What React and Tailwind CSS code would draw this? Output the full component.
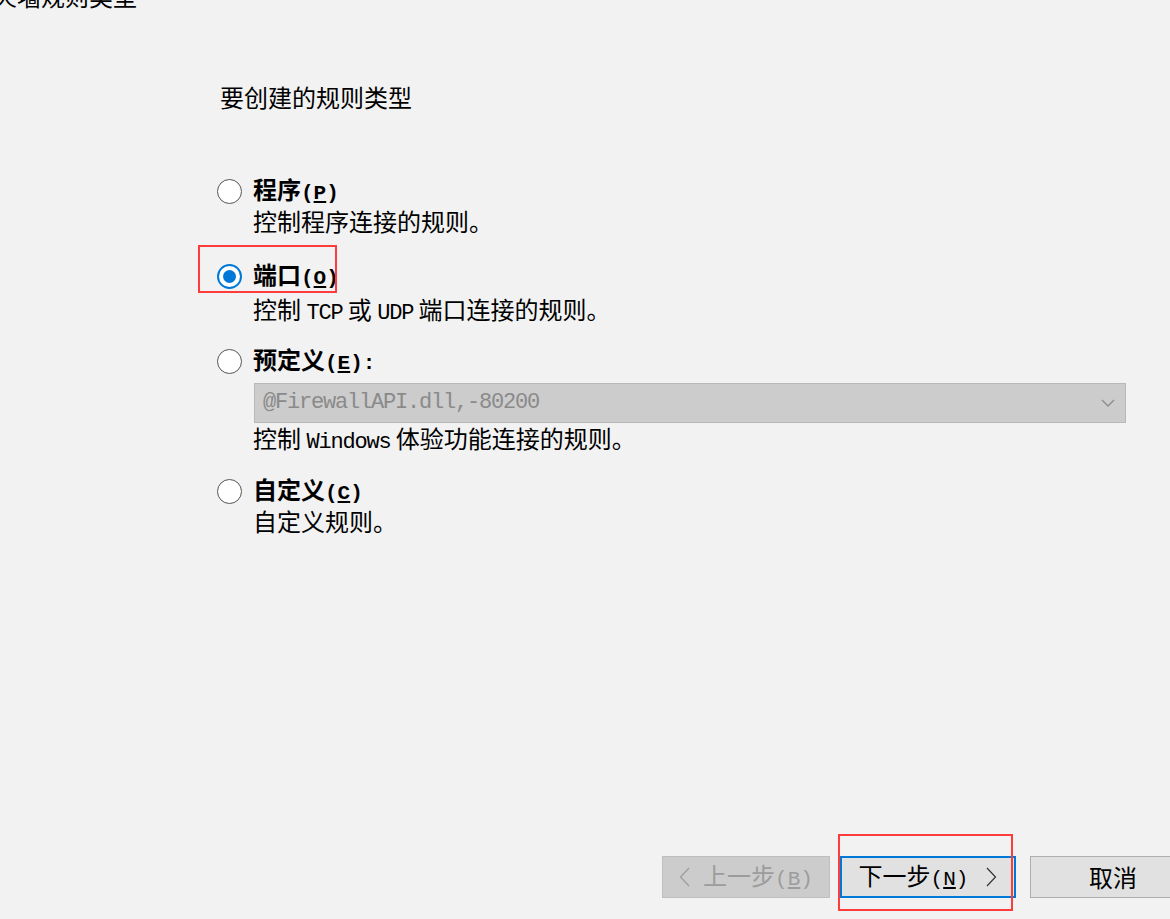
import { useState } from "react";

const mono = "font-['Liberation_Mono',monospace] text-[22px] tracking-[-1.2px]";
const monoKey = "font-['Liberation_Mono',monospace] text-[21px]";

function Radio({ checked }) {
  if (checked) {
    return (
      <span className="w-[25px] h-[25px] rounded-full border-2 border-[#0078d7] bg-white flex items-center justify-center shrink-0">
        <span className="w-[13px] h-[13px] rounded-full bg-[#0078d7]" />
      </span>
    );
  }
  return <span className="w-[25px] h-[25px] rounded-full border-[1.5px] border-[#555555] bg-white shrink-0" />;
}

function Option({ label, keyChar, colon, checked, onSelect, className = "" }) {
  return (
    <div className={"flex items-center h-[30px] cursor-default " + className} onClick={onSelect}>
      <Radio checked={checked} />
      <span className="ml-[11px] font-bold whitespace-nowrap">
        {label}
        <span className={monoKey + " font-bold underline-offset-2"}>
          ({<span className="underline">{keyChar}</span>}){colon ? ":" : ""}
        </span>
      </span>
    </div>
  );
}

function Desc({ children, className = "" }) {
  return <div className={"h-[30px] pl-[36px] whitespace-nowrap " + className}>{children}</div>;
}

export default function App() {
  const [type, setType] = useState("port");

  return (
    <div className="relative w-[1170px] h-[919px] overflow-hidden bg-[#f2f2f2] text-black text-[24px] leading-[30px] font-['Noto_Sans_CJK_SC',sans-serif] flex flex-col">
      {/* clipped header line */}
      <div className="mt-[-19px] ml-[-175px] h-[30px] whitespace-nowrap">选择要创建的防火墙规则类型</div>

      <div className="pl-[217px]">
        <div className="mt-[71px] ml-[3px] h-[30px]">要创建的规则类型</div>

        <Option className="mt-[64px]" label="程序" keyChar="P" checked={type === "program"} onSelect={() => setType("program")} />
        <Desc>控制程序连接的规则。</Desc>

        <Option className="mt-[25px]" label="端口" keyChar="O" checked={type === "port"} onSelect={() => setType("port")} />
        <Desc className="mt-[3px]">
          控制 <span className={mono}>TCP</span> 或 <span className={mono}>UDP</span> 端口连接的规则。
        </Desc>

        <Option className="mt-[22px]" label="预定义" keyChar="E" colon checked={type === "predefined"} onSelect={() => setType("predefined")} />
        <div className="mt-[7px] ml-[37px] w-[872px] h-[40px] bg-[#cccccc] border border-[#b8b8b8] flex items-center justify-between pl-[8px] pr-[10px]">
          <span className={mono + " text-[#8a8a8a]"}>@FirewallAPI.dll,-80200</span>
          <svg width="14" height="9" viewBox="0 0 14 9" fill="none">
            <polyline points="1,1 7,7 13,1" stroke="#8c8c8c" strokeWidth="1.3" />
          </svg>
        </div>
        <Desc>
          控制 <span className={mono}>Windows</span> 体验功能连接的规则。
        </Desc>

        <Option className="mt-[23px]" label="自定义" keyChar="C" checked={type === "custom"} onSelect={() => setType("custom")} />
        <Desc>自定义规则。</Desc>
      </div>

      {/* bottom buttons */}
      <div className="mt-auto mb-[21px] ml-[662px] flex items-center">
        <button disabled className="w-[168px] h-[42px] shrink-0 bg-[#cccccc] border border-[#bfbfbf] text-[#9c9c9c] flex items-center justify-center">
          <svg width="11" height="20" viewBox="0 0 11 20" fill="none">
            <polyline points="10,1 1.5,10 10,19" stroke="#9c9c9c" strokeWidth="1.2" />
          </svg>
          <span className="ml-[13px]">
            上一步<span className={monoKey}>({<span className="underline">B</span>})</span>
          </span>
        </button>
        <button className="ml-[10px] w-[176px] h-[42px] shrink-0 bg-[#e1e1e1] border-2 border-[#0078d7] flex items-center justify-center">
          <span>
            下一步<span className={monoKey}>({<span className="underline">N</span>})</span>
          </span>
          <svg className="ml-[18px]" width="11" height="20" viewBox="0 0 11 20" fill="none">
            <polyline points="1,1 9.5,10 1,19" stroke="#333" strokeWidth="1.2" />
          </svg>
        </button>
        <button className="ml-[14px] w-[166px] h-[42px] shrink-0 bg-[#e1e1e1] border border-[#adadad] flex items-center justify-center">
          取消
        </button>
      </div>

      {/* red annotation boxes */}
      <div className="absolute left-[198px] top-[245px] w-[139px] h-[48px] border-2 border-[#ff3c3c] pointer-events-none" />
      <div className="absolute left-[838px] top-[834px] w-[175px] h-[77px] border-2 border-[#ff3c3c] pointer-events-none" />
    </div>
  );
}
